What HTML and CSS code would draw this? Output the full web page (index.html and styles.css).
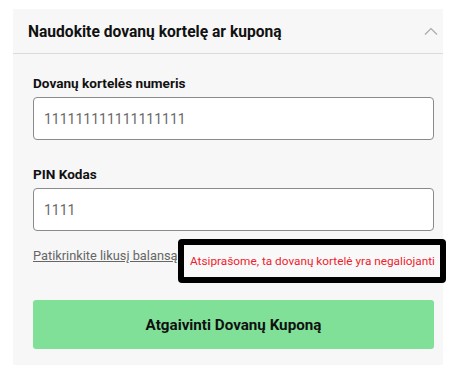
FILE: index.html
```html
<!DOCTYPE html>
<html lang="lt">
<head>
<meta charset="utf-8">
<link rel="stylesheet" href="styles.css">
</head>
<body>
<div class="panel">
  <div class="panel-header">
    <h2 class="panel-title">Naudokite dovanų kortelę ar kuponą</h2>
    <svg class="chevron" width="14" height="8" viewBox="0 0 14 8"><path d="M1 7.5 L7 1.5 L13 7.5" fill="none" stroke="#aaa" stroke-width="1.2"/></svg>
  </div>
  <div class="panel-body">
    <label class="field-label">Dovanų kortelės numeris</label>
    <div class="input">111111111111111111</div>
    <label class="field-label second">PIN Kodas</label>
    <div class="input">1111</div>
    <div class="link-row">
      <a class="balance-link">Patikrinkite likusį balansą</a>
      <div class="error-box">Atsiprašome, ta dovanų kortelė yra negaliojanti</div>
    </div>
    <button class="submit">Atgaivinti Dovanų Kuponą</button>
  </div>
</div>
</body>
</html>
```
FILE: styles.css
```css
* { box-sizing: border-box; }
body {
  margin: 0;
  background: #fff;
  font-family: Roboto, "Liberation Sans", sans-serif;
}
.panel {
  margin: 9px 0 0 13px;
  width: 430px;
  background: #f7f7f7;
}
.panel-header {
  height: 45px;
  border-bottom: 1px solid #dcdcdc;
  display: flex;
  align-items: center;
  justify-content: space-between;
  padding: 0 5px 0 15px;
}
.panel-title {
  margin: 0;
  font-size: 15.6px;
  font-weight: 700;
  color: #111;
  line-height: 20px;
  padding-top: 1px;
}
.chevron { display: block; margin-top: -1px; }
.panel-body {
  padding: 19px 9px 16px 20px;
  display: flex;
  flex-direction: column;
}
.field-label {
  font-size: 13.6px;
  font-weight: 700;
  line-height: 20px;
  color: #111;
}
.field-label.second { margin-top: 24px; }
.input {
  margin-top: 4px;
  height: 43px;
  border: 1px solid #8a8a8a;
  border-radius: 4px;
  background: #fff;
  padding: 0 10px;
  display: flex;
  align-items: center;
  font-size: 14px;
  color: #6a6a6a;
}
.link-row {
  position: relative;
  margin-top: 14px;
  height: 20px;
}
.balance-link {
  font-size: 12.8px;
  line-height: 20px;
  color: #666;
  text-decoration: underline;
}
.error-box {
  position: absolute;
  left: 145px;
  top: -6px;
  width: 268px;
  height: 44px;
  border: 6px solid #000;
  border-radius: 4px;
  background: #f9f9f9;
  padding: 0 0 0 6px;
  display: flex;
  align-items: center;
  font-size: 11.8px;
  color: #ee1c2e;
  white-space: nowrap;
}
.submit {
  margin-top: 35px;
  height: 49px;
  border: none;
  border-radius: 3px;
  background: #80e098;
  font-family: inherit;
  font-size: 15.2px;
  font-weight: 700;
  color: #111;
}
```
